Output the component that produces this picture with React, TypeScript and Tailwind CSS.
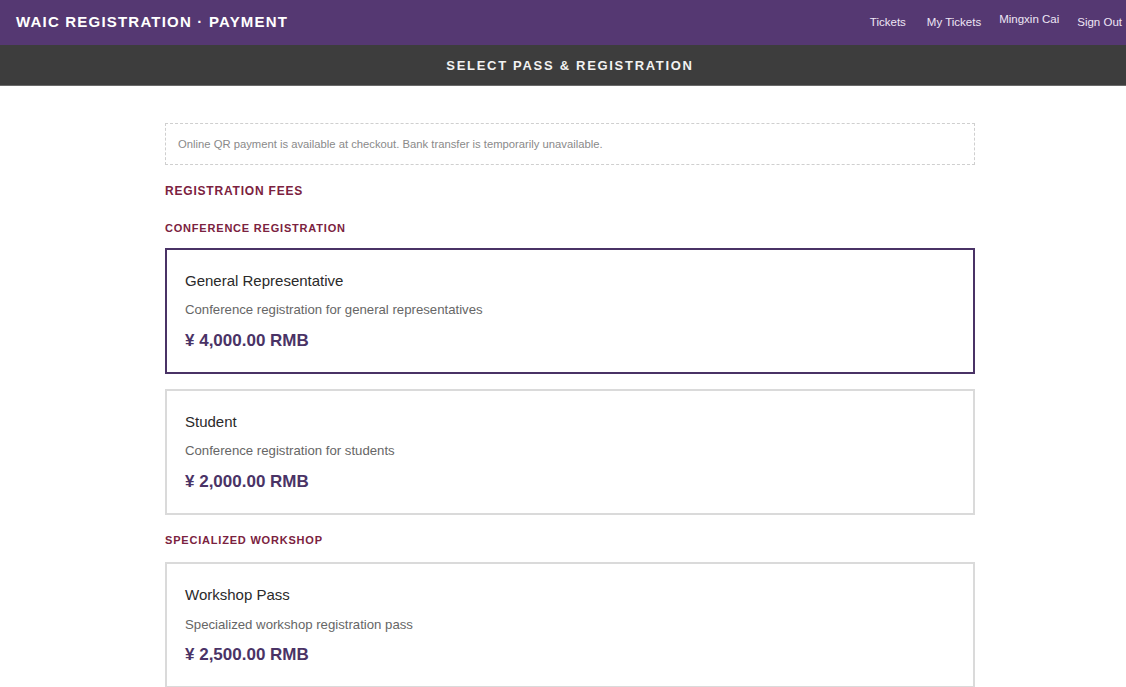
const passes = [
  {
    group: 'CONFERENCE REGISTRATION',
    items: [
      { id: 'general', name: 'General Representative', desc: 'Conference registration for general representatives', price: '¥ 4,000.00 RMB' },
      { id: 'student', name: 'Student', desc: 'Conference registration for students', price: '¥ 2,000.00 RMB' },
    ],
  },
  {
    group: 'SPECIALIZED WORKSHOP',
    items: [
      { id: 'workshop', name: 'Workshop Pass', desc: 'Specialized workshop registration pass', price: '¥ 2,500.00 RMB' },
    ],
  },
];

export default function App() {
  const selected = 'general';

  return (
    <div className="min-h-screen bg-white font-['Liberation_Sans',Arial,sans-serif]">
      {/* Top bar */}
      <header className="h-[45px] bg-[#553872] flex items-center justify-between pl-4 pr-1">
        <h1 className="text-[15px] font-bold tracking-[1.2px] text-white">WAIC REGISTRATION · PAYMENT</h1>
        <nav className="flex items-center text-[11.5px] text-[#eee6f5]">
          <a className="mr-[21px]">Tickets</a>
          <a className="mr-[18px]">My Tickets</a>
          <span className="mr-[18px] -mt-[6px]">Mingxin Cai</span>
          <a>Sign Out</a>
        </nav>
      </header>

      {/* Sub bar */}
      <div className="h-[41px] bg-[#3d3d3d] border-b border-[#6a6a6a] flex items-center justify-center pl-[14px] pt-[2px]">
        <h2 className="text-[13px] font-bold tracking-[1.7px] text-[#f2f2f2]">SELECT PASS &amp; REGISTRATION</h2>
      </div>

      <main className="ml-[165px] w-[810px] pt-[37px]">
        <div className="h-[42px] border border-dashed border-[#cfcfcf] flex items-center px-3 text-[11.25px] text-[#8a8a8a]">
          Online QR payment is available at checkout. Bank transfer is temporarily unavailable.
        </div>

        <h3 className="mt-[17px] text-[12px] font-bold tracking-[0.8px] text-[#7b2240]">REGISTRATION FEES</h3>

        {passes.map((g, i) => (
          <section key={g.group}>
            <h4
              className={
                i === 0
                  ? 'mt-[20px] mb-[11px] text-[11px] font-bold tracking-[0.8px] text-[#7b2240]'
                  : 'mt-[17px] mb-[14px] text-[11px] font-bold tracking-[0.8px] text-[#7b2240]'
              }
            >
              {g.group}
            </h4>
            <div className="flex flex-col gap-[15px]">
              {g.items.map((p) => (
                <div
                  key={p.id}
                  className={
                    p.id === selected
                      ? 'h-[126px] border-2 border-[#4a3366] px-[18px] pt-[20px]'
                      : 'h-[126px] border-2 border-[#dadada] px-[18px] pt-[20px]'
                  }
                >
                  <div className="text-[15px] text-[#2a2a2a]">{p.name}</div>
                  <div className="mt-[8px] text-[13.2px] text-[#666]">{p.desc}</div>
                  <div className="mt-[8px] text-[17px] font-bold text-[#4a3366]">{p.price}</div>
                </div>
              ))}
            </div>
          </section>
        ))}
      </main>
    </div>
  );
}
